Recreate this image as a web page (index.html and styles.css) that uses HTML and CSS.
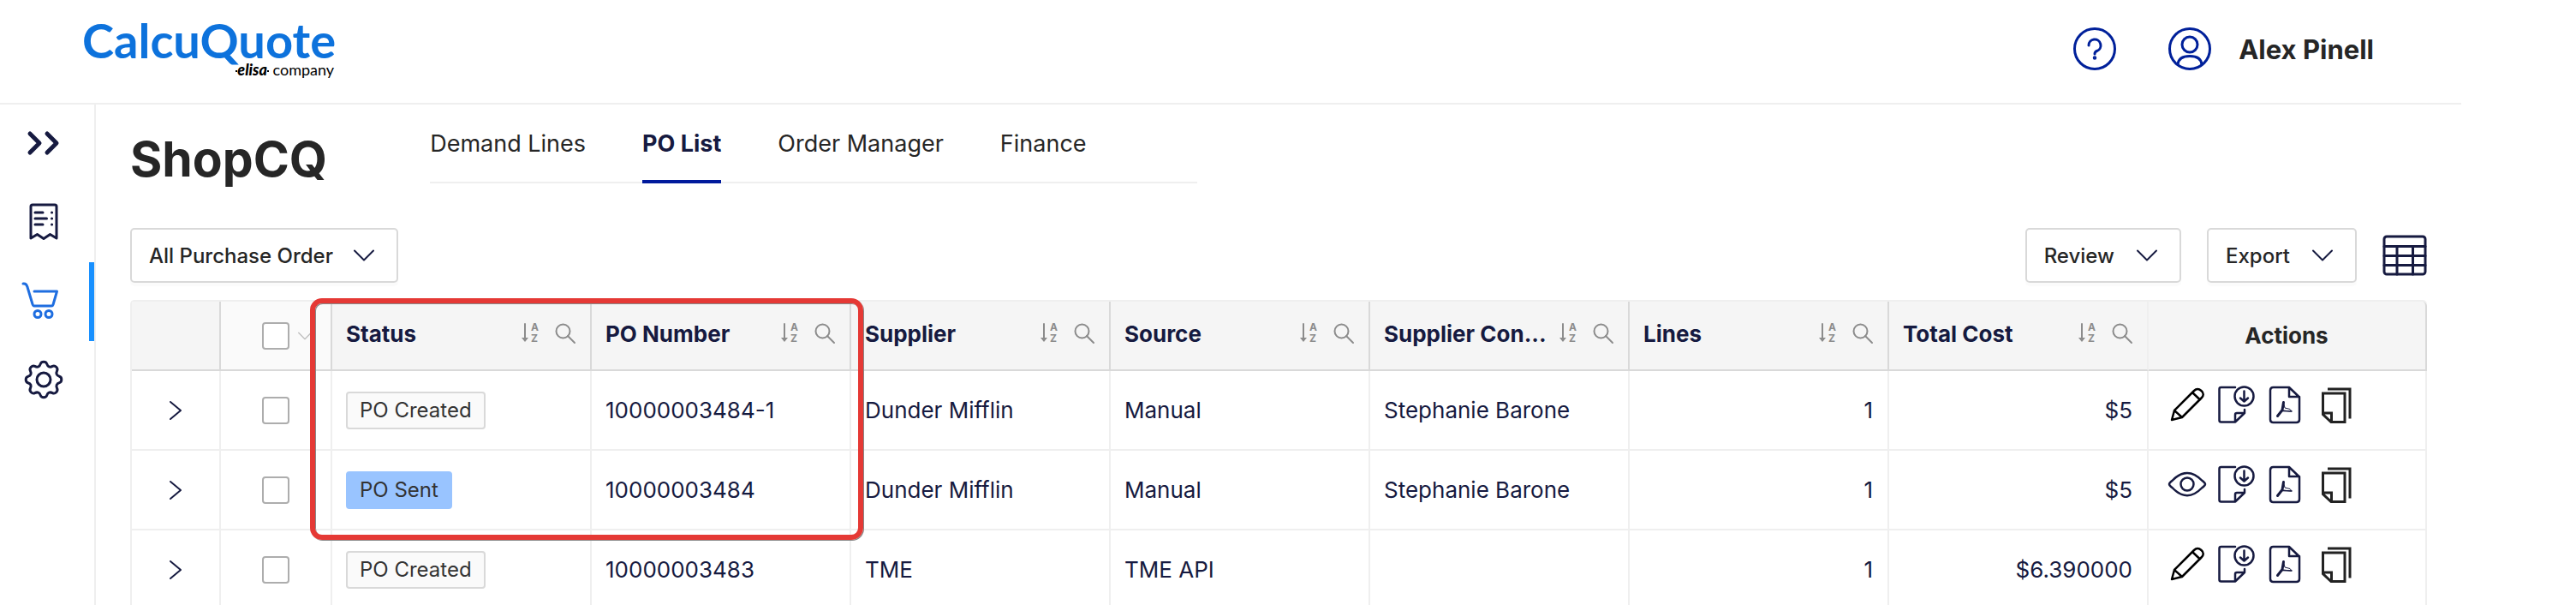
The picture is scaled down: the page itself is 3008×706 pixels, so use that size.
FILE: index.html
```html
<!DOCTYPE html>
<html lang="en">
<head>
  <meta charset="UTF-8">
  <meta name="viewport" content="width=device-width, initial-scale=1.0">
  <title>ShopCQ - PO List</title>
  <link rel="stylesheet" href="styles.css">
</head>
<body>

<!-- icon sprite -->
<svg class="sprite" aria-hidden="true">
  <symbol id="i-help" viewBox="0 0 50 50">
    <circle cx="25" cy="25" r="23.5"/>
    <path d="M18 21a7 7 0 1 1 9.500 6.500Q25 28.500 25 31"/>
    <circle cx="25" cy="35.500" r="1" stroke-width="2.500"/>
  </symbol>
  <symbol id="i-user" viewBox="0 0 50 50">
    <circle cx="25" cy="25" r="23.500"/>
    <circle cx="25" cy="20" r="9"/>
    <path d="M11 43.500C11.500 36 18 33.500 25 33.500S38.500 36 39 43.500"/>
  </symbol>
  <symbol id="i-expand" viewBox="0 0 48 48">
    <path d="M8 13L19 24 8 35M28 13L39 24 28 35"/>
  </symbol>
  <symbol id="i-receipt" viewBox="0 0 48 48">
    <path d="M9 43V6Q9 4 11 4H37Q39 4 39 6V43L31.500 38.500 24 43.500 16.500 38.500Z"/>
    <path d="M14 13H23M14 20H27.500M14 27H23M33.500 13h.1M33.500 20h.1M33.500 27h.1"/>
  </symbol>
  <symbol id="i-cart" viewBox="0 0 48 48">
    <path d="M0 4H1Q4 4 5 8L11 28Q11.500 30 13 30H33Q34.500 30 35 28.500L39.500 13H13"/>
    <circle cx="17" cy="39.500" r="4"/>
    <circle cx="30" cy="39.500" r="4"/>
  </symbol>
  <symbol id="i-gear" viewBox="0 0 48 48">
    <path d="M24 3.200Q26.900 3.200 27.700 5.600Q28.500 8.100 30.200 8.900Q32 9.600 34.300 8.400Q36.600 7.200 38.700 9.300Q40.800 11.400 39.600 13.700Q38.400 16 39.200 17.800Q39.900 19.500 42.400 20.300Q44.800 21.100 44.800 24Q44.800 26.900 42.400 27.700Q39.900 28.500 39.200 30.200Q38.400 32 39.600 34.300Q40.800 36.600 38.700 38.700Q36.600 40.800 34.300 39.600Q32 38.400 30.200 39.200Q28.500 39.900 27.700 42.400Q26.900 44.800 24 44.800Q21.100 44.800 20.300 42.400Q19.500 39.900 17.800 39.200Q16 38.400 13.700 39.600Q11.400 40.800 9.300 38.700Q7.200 36.600 8.400 34.300Q9.600 32 8.900 30.200Q8.100 28.500 5.600 27.700Q3.200 26.900 3.200 24Q3.200 21.100 5.600 20.300Q8.100 19.500 8.900 17.800Q9.600 16 8.400 13.700Q7.200 11.400 9.300 9.300Q11.400 7.200 13.700 8.400Q16 9.600 17.800 8.900Q19.500 8.100 20.300 5.600Q21.100 3.200 24 3.200Z"/>
    <circle cx="24" cy="24" r="8"/>
  </symbol>
  <symbol id="i-down" viewBox="0 0 24 24">
    <path d="M1 6.500L12 17.500 23 6.500"/>
  </symbol>
  <symbol id="i-right" viewBox="0 0 24 24">
    <path d="M6 2L18 12 6 22"/>
  </symbol>
  <symbol id="i-grid" viewBox="0 0 52 48">
    <rect x="2" y="2" width="48" height="44" rx="3"/>
    <path d="M2 13.500H50M2 24.500H50M2 35.500H50M17 13.500V46M35.500 13.500V46"/>
  </symbol>
  <symbol id="i-sort" viewBox="0 0 20 24">
    <path d="M4 1V20" fill="none" stroke-width="2"/>
    <path d="M0 17H8L4 22Z" stroke="none" fill="currentColor"/>
    <text class="az" x="11" y="9">A</text>
    <text class="az" x="11" y="22">Z</text>
  </symbol>
  <symbol id="i-search" viewBox="0 0 24 24">
    <circle cx="9.500" cy="9.500" r="8"/>
    <path d="M15 15L23 23"/>
  </symbol>
  <symbol id="i-pencil" viewBox="0 0 44 44">
    <path d="M4 40L7 29 30 6Q34 2 38.500 6T38.500 14.500L16 37ZM7 29L16 37M28 8L37 16.500"/>
  </symbol>
  <symbol id="i-eye" viewBox="0 0 44 44">
    <path d="M1 22Q1 20.500 5 17.500C16 6 28 6 39 17.500Q43 20.500 43 22T39 26.500C28 38 16 38 5 26.500Q1 23.500 1 22Z"/>
    <circle cx="22" cy="22" r="7.500"/>
  </symbol>
  <symbol id="i-download" viewBox="0 0 44 44">
    <path d="M20 2H3.500Q1.500 2 1.500 4V40.500Q1.500 42.500 3.500 42.500H20L31 32V28M20 42.500V34Q20 32 22 32H31"/>
    <circle cx="30.500" cy="12.500" r="11"/>
    <path d="M30.500 6.500V18.500M26 14.500L30.500 18.500 35 14.500"/>
  </symbol>
  <symbol id="i-pdf" viewBox="0 0 44 44">
    <path d="M25 2H6.500Q3 2 3 5.500V39.500Q3 43 6.500 43H33.500Q37 43 37 39.500V13.500ZM25 2V13H37"/>
    <path d="M11.500 35.500L17 28.500 18.500 19.500" stroke-width="3"/>
    <path d="M17 29L28 30 26 27.500 20 26 18.500 20" stroke-width="1"/>
    <path d="M17 29.500L28 30" stroke-width="1.500"/>
  </symbol>
  <symbol id="i-copy" viewBox="0 0 44 44">
    <path d="M12 4H38V38.500M6.500 9H32V42.500H16L6.500 33.500ZM6.500 32H16.500V42"/>
  </symbol>
</svg>

<div class="app">
  <header class="header">
    <a href="#" class="logo">
      <span class="logo-name">CalcuQuote</span>
      <span class="logo-sub"><span class="elisa">elisa</span> company</span>
    </a>
    <div class="account">
      <button class="icon-btn" aria-label="Help"><svg class="icon-top"><use href="#i-help"/></svg></button>
      <button class="icon-btn user">
        <svg class="icon-top"><use href="#i-user"/></svg>
        <span>Alex Pinell</span>
      </button>
    </div>
  </header>

  <div class="body">
    <nav class="sidebar">
      <button class="side-item" aria-label="Expand menu"><svg class="side-icon thick"><use href="#i-expand"/></svg></button>
      <a href="#" class="side-item" aria-label="Quotes"><svg class="side-icon"><use href="#i-receipt"/></svg></a>
      <a href="#" class="side-item active" aria-label="Shop"><svg class="side-icon"><use href="#i-cart"/></svg></a>
      <a href="#" class="side-item" aria-label="Settings"><svg class="side-icon"><use href="#i-gear"/></svg></a>
    </nav>

    <main class="main">
      <div class="page-head">
        <h1 class="title">ShopCQ</h1>
        <nav class="tabs">
          <a href="#" class="tab">Demand Lines</a>
          <a href="#" class="tab active">PO List</a>
          <a href="#" class="tab">Order Manager</a>
          <a href="#" class="tab">Finance</a>
        </nav>
      </div>

      <div class="toolbar">
        <select class="btn filter" aria-label="Purchase order filter">
          <option>All Purchase Order</option>
        </select>
        <div class="tools">
          <button class="btn">Review <svg class="chevron"><use href="#i-down"/></svg></button>
          <button class="btn">Export <svg class="chevron"><use href="#i-down"/></svg></button>
          <button class="icon-btn" aria-label="Columns"><svg class="grid-icon"><use href="#i-grid"/></svg></button>
        </div>
      </div>

      <div class="table-wrap">
        <table class="table">
          <colgroup>
            <col class="col-expand">
            <col class="col-check">
            <col><col><col><col><col><col><col>
            <col class="col-actions">
          </colgroup>
          <thead>
            <tr>
              <th></th>
              <th class="check-head">
                <div class="check-all">
                  <input type="checkbox" class="check" aria-label="Select all">
                  <button class="icon-btn" aria-label="Selection menu"><svg class="chevron small"><use href="#i-down"/></svg></button>
                </div>
              </th>
              <th><div class="th"><span class="th-text">Status</span><svg class="sort"><use href="#i-sort"/></svg><svg class="search"><use href="#i-search"/></svg></div></th>
              <th><div class="th"><span class="th-text">PO Number</span><svg class="sort"><use href="#i-sort"/></svg><svg class="search"><use href="#i-search"/></svg></div></th>
              <th><div class="th"><span class="th-text">Supplier</span><svg class="sort"><use href="#i-sort"/></svg><svg class="search"><use href="#i-search"/></svg></div></th>
              <th><div class="th"><span class="th-text">Source</span><svg class="sort"><use href="#i-sort"/></svg><svg class="search"><use href="#i-search"/></svg></div></th>
              <th><div class="th"><span class="th-text">Supplier Con...</span><svg class="sort"><use href="#i-sort"/></svg><svg class="search"><use href="#i-search"/></svg></div></th>
              <th><div class="th"><span class="th-text">Lines</span><svg class="sort"><use href="#i-sort"/></svg><svg class="search"><use href="#i-search"/></svg></div></th>
              <th class="last-data"><div class="th"><span class="th-text">Total Cost</span><svg class="sort"><use href="#i-sort"/></svg><svg class="search"><use href="#i-search"/></svg></div></th>
              <th class="actions-head">Actions</th>
            </tr>
          </thead>
          <tbody>
            <tr>
              <td class="center"><button class="icon-btn" aria-label="Expand row"><svg class="chevron"><use href="#i-right"/></svg></button></td>
              <td class="center"><input type="checkbox" class="check" aria-label="Select 10000003484-1"></td>
              <td><span class="badge">PO Created</span></td>
              <td>10000003484-1</td>
              <td>Dunder Mifflin</td>
              <td>Manual</td>
              <td>Stephanie Barone</td>
              <td class="num">1</td>
              <td class="num">$5</td>
              <td>
                <div class="actions">
                  <button class="icon-btn" aria-label="Edit"><svg class="act black"><use href="#i-pencil"/></svg></button>
                  <button class="icon-btn" aria-label="Download"><svg class="act"><use href="#i-download"/></svg></button>
                  <button class="icon-btn" aria-label="PDF"><svg class="act"><use href="#i-pdf"/></svg></button>
                  <button class="icon-btn" aria-label="Copy"><svg class="act bold"><use href="#i-copy"/></svg></button>
                </div>
              </td>
            </tr>
            <tr>
              <td class="center"><button class="icon-btn" aria-label="Expand row"><svg class="chevron"><use href="#i-right"/></svg></button></td>
              <td class="center"><input type="checkbox" class="check" aria-label="Select 10000003484"></td>
              <td><span class="badge sent">PO Sent</span></td>
              <td>10000003484</td>
              <td>Dunder Mifflin</td>
              <td>Manual</td>
              <td>Stephanie Barone</td>
              <td class="num">1</td>
              <td class="num">$5</td>
              <td>
                <div class="actions">
                  <button class="icon-btn" aria-label="View"><svg class="act"><use href="#i-eye"/></svg></button>
                  <button class="icon-btn" aria-label="Download"><svg class="act"><use href="#i-download"/></svg></button>
                  <button class="icon-btn" aria-label="PDF"><svg class="act"><use href="#i-pdf"/></svg></button>
                  <button class="icon-btn" aria-label="Copy"><svg class="act bold"><use href="#i-copy"/></svg></button>
                </div>
              </td>
            </tr>
            <tr>
              <td class="center"><button class="icon-btn" aria-label="Expand row"><svg class="chevron"><use href="#i-right"/></svg></button></td>
              <td class="center"><input type="checkbox" class="check" aria-label="Select 10000003483"></td>
              <td><span class="badge">PO Created</span></td>
              <td>10000003483</td>
              <td>TME</td>
              <td>TME API</td>
              <td></td>
              <td class="num">1</td>
              <td class="num">$6.390000</td>
              <td>
                <div class="actions">
                  <button class="icon-btn" aria-label="Edit"><svg class="act black"><use href="#i-pencil"/></svg></button>
                  <button class="icon-btn" aria-label="Download"><svg class="act"><use href="#i-download"/></svg></button>
                  <button class="icon-btn" aria-label="PDF"><svg class="act"><use href="#i-pdf"/></svg></button>
                  <button class="icon-btn" aria-label="Copy"><svg class="act bold"><use href="#i-copy"/></svg></button>
                </div>
              </td>
            </tr>
          </tbody>
        </table>
        <div class="highlight"></div>
      </div>
    </main>
  </div>
</div>

</body>
</html>
```

FILE: styles.css
```css
* {
  box-sizing: border-box;
}

body {
  margin: 0;
  background: #fff;
  color: #262626;
  font-family: Inter, "Liberation Sans", sans-serif;
  font-size: 26px;
}

a {
  color: inherit;
  text-decoration: none;
}

button,
select {
  font-family: inherit;
  font-size: inherit;
  color: inherit;
  cursor: pointer;
}

svg {
  display: block;
  flex: none;
  overflow: visible;
  fill: none;
  stroke: currentColor;
  stroke-width: 2;
  stroke-linecap: round;
  stroke-linejoin: round;
}

symbol {
  overflow: visible;
}

.sprite {
  position: absolute;
  width: 0;
  height: 0;
}

.app {
  display: flex;
  flex-direction: column;
  height: 100vh;
  padding-right: 134px;
  overflow: hidden;
}

.icon-btn {
  display: inline-flex;
  align-items: center;
  padding: 0;
  border: 0;
  background: none;
}

/* header */
.header {
  display: flex;
  flex: none;
  justify-content: space-between;
  align-items: center;
  height: 122px;
  padding: 0 102px 6px 96px;
  border-bottom: 2px solid #efefef;
}

.logo {
  display: flex;
  flex-direction: column;
  align-items: flex-end;
  font-family: Lato, sans-serif;
}

.logo-name {
  color: #0d72dc;
  font-size: 56px;
  font-weight: 700;
  line-height: 48px;
}

.logo-sub {
  padding-right: 2px;
  color: #000;
  font-size: 18px;
  line-height: 20px;
}

.elisa {
  font-weight: 900;
  font-style: italic;
}

.elisa::before,
.elisa::after {
  content: "";
  display: inline-block;
  width: 2px;
  height: 2px;
  margin-bottom: 4px;
  background: #000;
}

.account {
  display: flex;
  align-items: center;
  gap: 61px;
}

.icon-top {
  width: 50px;
  height: 50px;
  color: #00209a;
  stroke-width: 3;
}

.user {
  gap: 32px;
  font-size: 31px;
  font-weight: 700;
}

.body {
  display: flex;
  flex: 1;
  min-height: 0;
}

/* sidebar */
.sidebar {
  flex: none;
  width: 112px;
  border-right: 2px solid #efefef;
}

.side-item {
  display: flex;
  justify-content: center;
  align-items: center;
  width: 100%;
  height: 92px;
  padding: 0 2px 2px 0;
  border: 0;
  border-right: 6px solid transparent;
  background: none;
  color: #161a40;
}

.side-item.active {
  border-color: #1890ff;
  color: #1f6ee0;
}

.side-icon {
  width: 48px;
  height: 48px;
  stroke-width: 3;
}

.side-icon.thick {
  stroke-width: 5;
}

/* page */
.main {
  flex: 1;
  min-width: 0;
  padding: 0 40px;
}

.page-head {
  display: flex;
  align-items: flex-start;
  gap: 120px;
  height: 92px;
  margin-bottom: 52px;
}

.title {
  margin: 0;
  padding-top: 28px;
  font-size: 57px;
  font-weight: 700;
  line-height: 72px;
}

.tabs {
  display: flex;
  gap: 66px;
  width: 33.4%;
  height: 92px;
  border-bottom: 2px solid #efefef;
}

.tab {
  height: 92px;
  border-bottom: 4px solid transparent;
  font-size: 27px;
  line-height: 92px;
  white-space: nowrap;
}

.tab.active {
  border-color: #001a9c;
  color: #161a40;
  font-weight: 700;
}

.toolbar,
.tools {
  display: flex;
  align-items: center;
}

.toolbar {
  justify-content: space-between;
  margin-bottom: 20px;
}

.tools {
  gap: 30px;
}

.btn {
  display: flex;
  align-items: center;
  gap: 26px;
  height: 64px;
  padding: 0 26px 0 20px;
  border: 2px solid #d9d9d9;
  border-radius: 5px;
  background: #fff;
  box-shadow: 0 4px 0 rgba(0, 0, 0, 0.015);
  color: #262626;
  font-size: 24px;
  font-weight: 500;
}

.filter {
  appearance: none;
  padding-right: 74px;
  background: #fff url("data:image/svg+xml,%3Csvg xmlns='http://www.w3.org/2000/svg' width='24' height='24' fill='none' stroke='%23161a40' stroke-width='2' stroke-linecap='round' stroke-linejoin='round'%3E%3Cpath d='M1 6.500L12 17.500 23 6.500'/%3E%3C/svg%3E") no-repeat right 26px center;
}

.chevron {
  width: 24px;
  height: 24px;
  color: #161a40;
}

.grid-icon {
  width: 52px;
  height: 48px;
  color: #161a40;
  stroke-width: 3;
}

/* table */
.table-wrap {
  position: relative;
}

.table {
  width: 100%;
  table-layout: fixed;
  border-collapse: separate;
  border-spacing: 0;
  border: solid #efefef;
  border-width: 2px 0 0 2px;
  border-radius: 5px 5px 0 0;
  color: #161a40;
}

.col-expand {
  width: 104px;
}

.col-check {
  width: 130px;
}

.col-actions {
  width: 325px;
}

th {
  height: 81px;
  padding: 0 17px 0 16px;
  border: solid #d9d9d9;
  border-width: 0 2px 2px 0;
  background: #f5f5f5;
  font-weight: 700;
  text-align: left;
}

th.check-head {
  padding: 0;
  background: #fafafa;
}

th.last-data {
  border-right-color: #efefef;
}

th.actions-head {
  border-top-right-radius: 5px;
  color: #262626;
  text-align: center;
}

.check-all {
  display: grid;
  grid-template-columns: 1fr auto 1fr;
  align-items: center;
  gap: 10px;
}

.check-all .check {
  grid-column: 2;
}

.th {
  display: flex;
  align-items: center;
  padding-bottom: 5px;
  color: #8c8c8c;
}

.th-text {
  flex: 1;
  color: #161a40;
  white-space: nowrap;
}

.sort {
  width: 20px;
  height: 24px;
  margin-right: 19px;
}

.az {
  fill: #8c8c8c;
  stroke: none;
  font-size: 12px;
  font-weight: 700;
}

.search {
  width: 24px;
  height: 24px;
}

td {
  height: 93px;
  padding: 0 17px 0 16px;
  border: solid #efefef;
  border-width: 0 2px 2px 0;
}

td.center {
  padding: 0;
  font-size: 0;
  text-align: center;
}

td.center > * {
  vertical-align: middle;
}

td.num {
  text-align: right;
}

.check {
  appearance: none;
  width: 32px;
  height: 32px;
  margin: 0;
  border: 2px solid #adadad;
  border-radius: 4px;
  background: #fff;
}

.chevron.small {
  width: 16px;
  height: 24px;
  color: #bfbfbf;
}

.badge {
  display: inline-block;
  height: 44px;
  padding: 0 14px;
  border: 2px solid #d9d9d9;
  border-radius: 4px;
  background: #fafafa;
  color: #333;
  font-size: 24px;
  line-height: 40px;
  vertical-align: middle;
}

.badge.sent {
  border-color: #99c4ff;
  background: #99c4ff;
}

.actions {
  display: flex;
  gap: 14px;
  padding: 0 0 14px 7px;
}

.act {
  width: 44px;
  height: 44px;
  stroke-width: 2.5;
}

.act.black {
  color: #000;
}

.act.bold {
  color: #222;
  stroke-width: 3;
  stroke-linecap: butt;
  stroke-linejoin: miter;
}

/* marks the status and PO number cells */
.highlight {
  position: absolute;
  top: -2px;
  left: 210px;
  width: 646px;
  height: 282px;
  border: 6px solid #e53935;
  border-radius: 14px;
  box-shadow: 1px 1px 0 #888, inset 1px 1px 0 #888;
  pointer-events: none;
}
```
